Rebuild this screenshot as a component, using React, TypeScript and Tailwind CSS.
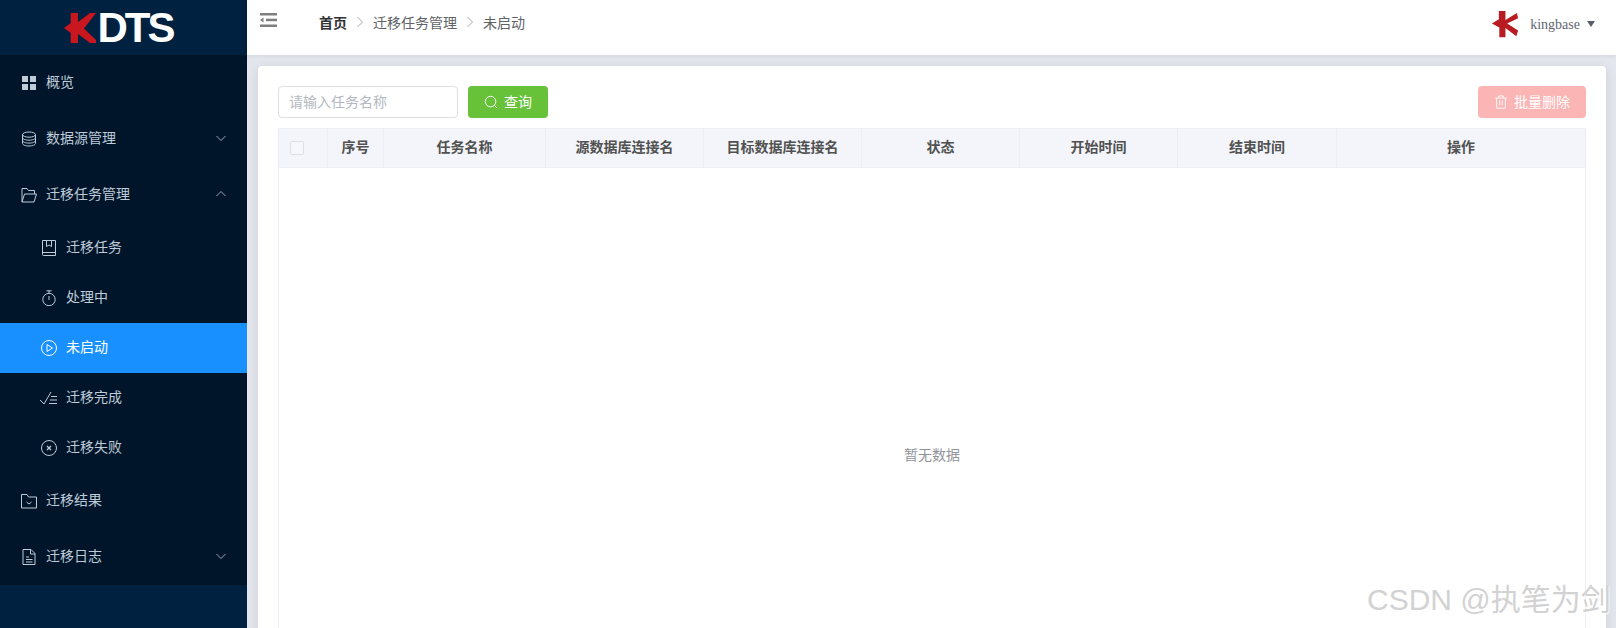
import React from "react";

const cn = "w-4 h-4 shrink-0";
const I = ({ children, className = cn }: { children: React.ReactNode; className?: string }) => (
  <svg viewBox="0 0 16 16" fill="none" stroke="currentColor" strokeWidth="1" className={className}>
    {children}
  </svg>
);

const GridI = () => (
  <svg viewBox="0 0 16 16" className={cn} fill="currentColor">
    <rect x="1" y="1" width="6" height="6" />
    <rect x="9" y="1" width="6" height="6" />
    <rect x="1" y="9" width="6" height="6" />
    <rect x="9" y="9" width="6" height="6" />
  </svg>
);
const Db = () => (
  <I>
    <ellipse cx="8" cy="3.6" rx="6.5" ry="2.6" />
    <path d="M1.5 3.6v8.8c0 1.4 2.9 2.6 6.5 2.6s6.500-1.200 6.500-2.600V3.600M1.500 6.600c0 1.400 2.900 2.600 6.500 2.600s6.500-1.200 6.500-2.600M1.500 9.500c0 1.400 2.900 2.600 6.500 2.600s6.500-1.200 6.500-2.600" />
  </I>
);
const FolderOpen = () => (
  <I>
    <path d="M1 15V1.500h5l1.500 2H13.500V7M1 15h12l2.500-8H3.500L1 15Z" />
  </I>
);
const Book = () => (
  <I>
    <path d="M1.500 0.500h13v15H2.500a1 1 0 0 1-1-1V0.500ZM1.500 12.500h13M5.500 0.500v6l2.500-1.500 2.500 1.500v-6" />
  </I>
);
const Timer = () => (
  <I>
    <circle cx="8" cy="9.500" r="6.200" />
    <path d="M5.500 0.800h5M8 0.800v2.500M8 6v4" />
  </I>
);
const Play = () => (
  <I>
    <circle cx="8" cy="8" r="7.500" />
    <path d="M6 4.500v7L11.500 8 6 4.500Z" />
  </I>
);
const Done = () => (
  <I className="w-4 h-4 shrink-0 overflow-visible">
    <path d="M-1 10l4 4L10 2M10 6.500h6M9 10h7M8 13.500h8" />
  </I>
);
const XC = () => (
  <I>
    <circle cx="8" cy="8" r="7.500" />
    <path d="M6 6l4 4M10 6l-4 4" strokeWidth="1.300" />
  </I>
);
const FolderCheck = () => (
  <I>
    <path d="M0.500 1.500h5.500l1.500 2.500H15.500V15H0.500V1.500ZM5.500 9l2.500 2 2.500-2" />
  </I>
);
const Doc = () => (
  <I>
    <path d="M2 0.500h8l4 4V15.500H2V0.500ZM9.500 0.500v4.500h4.500M5 8h3M5 10.500h6.500M5 13h6.500" />
  </I>
);
const Down = () => (
  <svg viewBox="0 0 12 12" className="w-3 h-3 mb-[2px]" fill="none" stroke="currentColor" strokeWidth="0.800">
    <path d="M1.500 4l4.500 4.500L10.500 4" />
  </svg>
);
const Up = () => (
  <svg viewBox="0 0 12 12" className="w-3 h-3 mb-[2px]" fill="none" stroke="currentColor" strokeWidth="0.800">
    <path d="M1.500 8L6 3.500 10.500 8" />
  </svg>
);
const Sep = () => (
  <svg viewBox="0 0 8 12" className="w-2 h-3 mx-[9px] text-[#a8a8a8]" fill="none" stroke="currentColor" strokeWidth="1">
    <path d="M1.500 1l5 5-5 5" />
  </svg>
);

const Row = ({ icon, label, chev, sub, active }: { icon: React.ReactNode; label: string; chev?: "up" | "down"; sub?: boolean; active?: boolean }) => (
  <div
    className={`flex items-center ${sub ? "h-[50px] pl-[41px]" : "h-[56px] pl-[21px]"} pr-[20px] ${active ? "bg-[#1890ff] text-white" : "text-[#bfcbd9]"}`}
  >
    {icon}
    <span className="ml-[9px] pb-[4px] text-[14px] leading-none flex-1">{label}</span>
    {chev === "down" && <Down />}
    {chev === "up" && <Up />}
  </div>
);

const KMark = ({ className }: { className: string }) => (
  <svg viewBox="0 0 32 32" className={className} fill="#b81c22">
    <path d="M9 1h7.500v10.500L29.500 3.500 31 9.500 18.500 15.500 31 23.500 29 30 16.500 20.500V31H9.500V20L1 15.500 9 10.500V1Z" />
  </svg>
);

const heads = ["序号", "任务名称", "源数据库连接名", "目标数据库连接名", "状态", "开始时间", "结束时间", "操作"];

export default function App() {
  return (
    <div className="relative flex w-[1616px] h-[628px] overflow-hidden bg-[#e3e6ec] font-['Noto_Sans_CJK_SC','Noto_Sans',sans-serif]">
      <aside className="w-[247px] shrink-0 flex flex-col bg-[#002140]">
        <div className="h-[55px] flex items-center justify-center pr-[11px]">
          <svg viewBox="0 0 32 30" className="w-[32px] h-[30px] mr-[2px]">
            <path d="M6.700 0H14V9L26 0H32L20 15.500 32 27V30H26L14 21V30H6.700V20L0 15 6.700 10Z" fill="#c8171f" />
          </svg>
          <span className="font-['Liberation_Sans',sans-serif] font-bold text-[42px] leading-none tracking-[-3px] text-white">DTS</span>
        </div>
        <nav className="bg-[#001529]">
          <Row icon={<GridI />} label="概览" />
          <Row icon={<Db />} label="数据源管理" chev="down" />
          <Row icon={<FolderOpen />} label="迁移任务管理" chev="up" />
          <Row sub icon={<Book />} label="迁移任务" />
          <Row sub icon={<Timer />} label="处理中" />
          <Row sub active icon={<Play />} label="未启动" />
          <Row sub icon={<Done />} label="迁移完成" />
          <Row sub icon={<XC />} label="迁移失败" />
          <Row icon={<FolderCheck />} label="迁移结果" />
          <Row icon={<Doc />} label="迁移日志" chev="down" />
        </nav>
      </aside>
      <div className="flex-1 flex flex-col min-w-0">
        <header className="h-[55px] shrink-0 bg-white flex items-start shadow-[0_1px_4px_rgba(0,21,41,0.08)]">
          <svg viewBox="0 0 17 14" className="w-[17px] h-[14px] ml-[13px] mt-[13px] text-[#7f7f7f]" fill="currentColor">
            <rect x="0" y="0" width="17" height="2.500" />
            <rect x="6" y="5.700" width="11" height="2.500" />
            <rect x="0" y="11.500" width="17" height="2.500" />
            <path d="M0 7l3.500-2.500v5z" />
          </svg>
          <div className="flex items-center ml-[42px] mt-[13px] h-[18px] text-[14px] leading-none text-[#606266]">
            <span className="font-bold text-[#303133]">首页</span>
            <Sep />
            <span>迁移任务管理</span>
            <Sep />
            <span>未启动</span>
          </div>
          <div className="ml-auto flex items-center mt-[10px] pr-[20px]">
            <KMark className="w-[28px] h-[28px] mr-[11px]" />
            <span className="font-['Liberation_Serif',serif] text-[14px] text-[#5f6670]">kingbase</span>
            <svg viewBox="0 0 8 6" className="w-[10px] h-[6px] ml-[6px] text-[#5a5e66]" fill="currentColor">
              <path d="M0 0h8L4 6z" />
            </svg>
          </div>
        </header>
        <main className="flex-1 min-h-0 pt-[11px] pl-[11px] pr-[10px]">
          <div className="bg-white rounded-[4px] px-[20px] pt-[20px] shadow-[0_2px_12px_rgba(0,0,0,0.1)]">
            <div className="flex items-center h-[32px]">
              <div className="w-[180px] h-[32px] pb-[2px] border border-[#dcdfe6] rounded-[4px] flex items-center px-[10px] text-[14px] text-[#b4b8bf]">请输入任务名称</div>
              <button className="ml-[10px] w-[80px] h-[32px] rounded-[4px] bg-[#67c23a] text-white text-[14px] flex items-center justify-center">
                <svg viewBox="0 0 16 16" className="w-[14px] h-[14px] mr-[6px]" fill="none" stroke="currentColor" strokeWidth="1.100">
                  <circle cx="7.500" cy="7.500" r="6" />
                  <path d="M12 12l3 3" />
                </svg>
                <span className="pb-[2px]">查询</span>
              </button>
              <button className="ml-auto w-[108px] h-[32px] rounded-[4px] bg-[#fbb5b5] text-white text-[14px] flex items-center justify-center">
                <svg viewBox="0 0 16 16" className="w-[14px] h-[14px] mr-[6px]" fill="none" stroke="currentColor" strokeWidth="1">
                  <path d="M1.500 3.500h13M5.500 3.500V1h5v2.500M3 3.500V15h10V3.500M6.500 6v6M9.500 6v6" />
                </svg>
                <span className="pb-[2px]">批量删除</span>
              </button>
            </div>
            <div className="mt-[10px] border border-[#ebeef5]">
              <div className="grid grid-cols-[49px_56px_162px_158px_158px_158px_158px_159px_1fr] h-[39px] bg-[#f3f5fa] border-b border-[#ebeef5]">
                <div className="flex items-center pl-[11px] border-r border-[#ebeef5]">
                  <div className="w-[14px] h-[14px] bg-[#f5f7fa] border border-[#dcdfe6] rounded-[2px]" />
                </div>
                {heads.map((h, i) => (
                  <div key={h} className={`flex items-center justify-center pb-[4px] text-[14px] font-bold text-[#515151] ${i < 7 ? "border-r border-[#ebeef5]" : ""}`}>
                    {h}
                  </div>
                ))}
              </div>
              <div className="h-[577px] pb-[4px] flex items-center justify-center text-[14px] text-[#909399]">暂无数据</div>
            </div>
          </div>
        </main>
      </div>
      <div className="absolute left-[1367px] top-[581px] text-[30px] leading-[38px] whitespace-nowrap text-[#d2d2d2] font-['Liberation_Sans','Noto_Sans_CJK_SC',sans-serif] [text-shadow:1px_1px_1px_rgba(255,255,255,0.9)]">
        CSDN @执笔为剑
      </div>
    </div>
  );
}
